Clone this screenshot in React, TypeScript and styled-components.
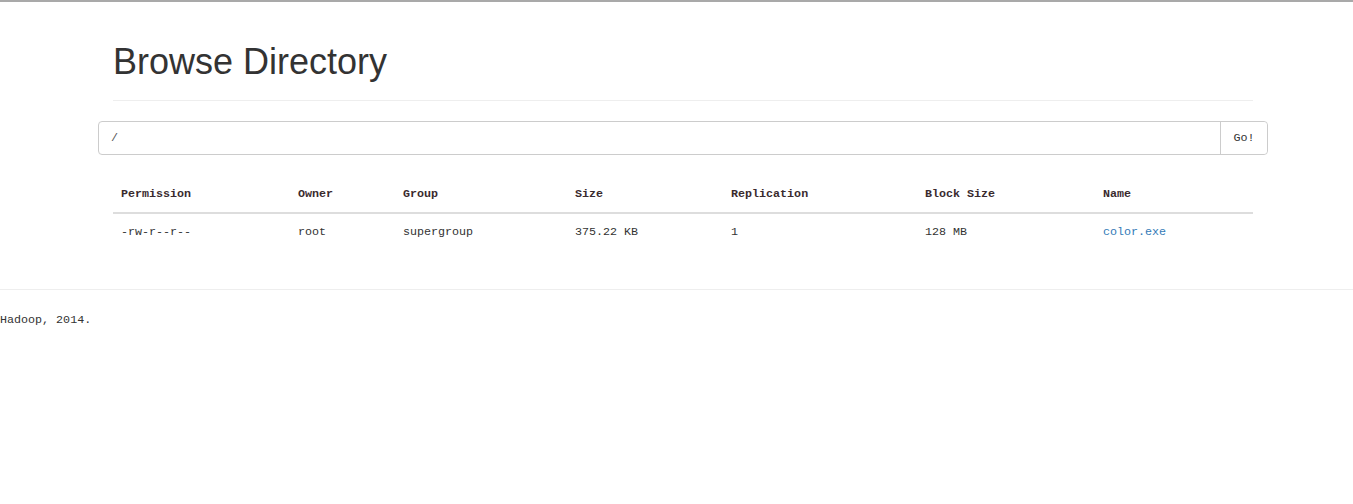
import React from 'react';
import styled, { createGlobalStyle } from 'styled-components';

const Global = createGlobalStyle`
  html, body {
    margin: 0;
    padding: 0;
    background: #fff;
  }
  body {
    font-family: "Liberation Mono", "DejaVu Sans Mono", monospace;
    font-size: 11.7px;
    line-height: 20px;
    color: #333;
  }
  * { box-sizing: border-box; }
`;

const TopLine = styled.div`
  height: 2px;
  background: #a9a9a9;
`;

const Container = styled.div`
  width: 1170px;
  margin-left: 98px;
  padding: 0 15px;
`;

const PageHeader = styled.div`
  margin: 40px 0 20px;
  padding-bottom: 8px;
  border-bottom: 1px solid #eee;
`;

const Title = styled.h1`
  margin: 0 0 10px;
  font-family: "Liberation Sans", Arial, sans-serif;
  font-weight: 400;
  font-size: 36px;
  line-height: 40px;
  color: #333;
`;

const InputGroup = styled.div`
  display: flex;
  margin: 0 -15px;
  height: 34px;
  border: 1px solid #ccc;
  border-radius: 4px;
`;

const PathInput = styled.input`
  flex: 1;
  border: none;
  outline: none;
  padding: 6px 12px;
  font: inherit;
  color: #555;
  background: transparent;
`;

const GoButton = styled.button`
  width: 47px;
  border: none;
  border-left: 1px solid #ccc;
  background: #fff;
  font: inherit;
  color: #333;
  padding: 0;
  border-radius: 0 4px 4px 0;
`;

const Table = styled.table`
  width: 100%;
  margin: 21px 0 20px;
  border-collapse: collapse;
`;

const Th = styled.th<{ $w: number }>`
  width: ${p => p.$w}px;
  text-align: left;
  padding: 8px;
  font-weight: 700;
  color: #3a2a2e;
  border-bottom: 2px solid #ddd;
`;

const Td = styled.td`
  padding: 8px;
  border-top: 1px solid #ddd;
`;

const Link = styled.a`
  color: #337ab7;
  text-decoration: none;
`;

const Rule = styled.hr`
  margin: 39px 0 20px;
  border: 0;
  border-top: 1px solid #eee;
`;

const Footer = styled.p`
  margin: 0;
`;

const columns: [string, number][] = [
  ['Permission', 177],
  ['Owner', 105],
  ['Group', 172],
  ['Size', 156],
  ['Replication', 194],
  ['Block Size', 178],
  ['Name', 158],
];

const row = ['-rw-r--r--', 'root', 'supergroup', '375.22 KB', '1', '128 MB'];

export default function App() {
  return (
    <>
      <Global />
      <TopLine />
      <Container>
        <PageHeader>
          <Title>Browse Directory</Title>
        </PageHeader>
        <InputGroup>
          <PathInput defaultValue="/" />
          <GoButton>Go!</GoButton>
        </InputGroup>
        <Table>
          <thead>
            <tr>
              {columns.map(([name, w]) => (
                <Th key={name} $w={w}>{name}</Th>
              ))}
            </tr>
          </thead>
          <tbody>
            <tr>
              {row.map((v, i) => (
                <Td key={i}>{v}</Td>
              ))}
              <Td><Link href="#">color.exe</Link></Td>
            </tr>
          </tbody>
        </Table>
      </Container>
      <Rule />
      <Footer>Hadoop, 2014.</Footer>
    </>
  );
}
